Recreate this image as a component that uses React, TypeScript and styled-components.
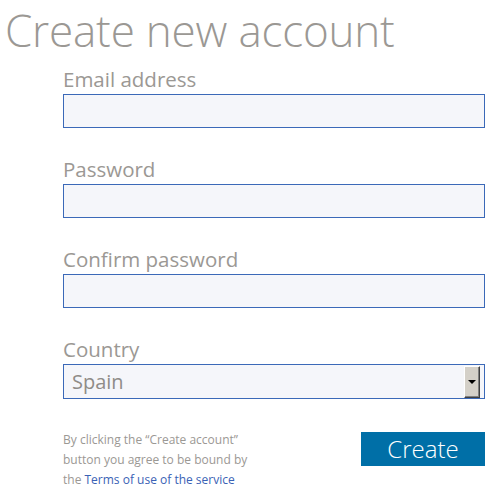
import React from "react";
import styled, { createGlobalStyle } from "styled-components";

const Global = createGlobalStyle`
  html, body { margin: 0; padding: 0; background: #ffffff; }
  body { font-family: "Open Sans", "Liberation Sans", sans-serif; }
  * { box-sizing: border-box; }
`;

const Page = styled.div`
  width: 490px;
  padding: 0 5px 0 0;
`;

const Title = styled.h1`
  margin: 0;
  padding: 0 0 0 5px;
  font-family: "Open Sans", sans-serif;
  font-weight: 300;
  font-size: 44px;
  line-height: 60px;
  color: #9b9894;
  letter-spacing: -0.2px;
`;

const Form = styled.form`
  margin: 8px 0 0 63px;
  display: flex;
  flex-direction: column;
  gap: 30px;
`;

const Field = styled.div`
  display: flex;
  flex-direction: column;
`;

const Label = styled.label`
  font-size: 20.5px;
  line-height: 22px;
  padding-bottom: 4px;
  color: #9b9894;
  font-weight: 400;
`;

const TextInput = styled.input`
  width: 100%;
  height: 34px;
  border: 1px solid #3b69b8;
  background: #f5f6fa;
  margin: 0;
  padding: 0 8px;
  font-family: inherit;
  font-size: 18px;
  outline: none;
`;

const SelectBox = styled.div`
  display: flex;
  align-items: center;
  height: 35px;
  border: 1px solid #3b69b8;
  background: #f5f6fa;
  padding: 1px 4px 1px 0;
`;

const NativeSelect = styled.select`
  flex: 1;
  height: 100%;
  appearance: none;
  -webkit-appearance: none;
  border: none;
  background: transparent;
  padding: 0 0 0 8px;
  font-family: inherit;
  font-size: 20px;
  color: #8f8c88;
  outline: none;
`;

const ArrowButton = styled.div`
  width: 16px;
  height: 32px;
  background: #d4d0c8;
  border-top: 1px solid #ffffff;
  border-left: 1px solid #ffffff;
  border-right: 1px solid #404040;
  border-bottom: 1px solid #404040;
  box-shadow: inset -1px -1px 0 #808080;
  display: flex;
  align-items: center;
  justify-content: center;
`;

const Triangle = styled.span`
  width: 0;
  height: 0;
  border-left: 4px solid transparent;
  border-right: 4px solid transparent;
  border-top: 4px solid #000000;
  margin-top: 1px;
`;

const Footer = styled.div`
  display: flex;
  justify-content: space-between;
  align-items: flex-start;
  margin-top: 1px;
`;

const Terms = styled.p`
  margin: 0;
  width: 200px;
  font-size: 12px;
  line-height: 20px;
  color: #9b9894;
`;

const TermsLink = styled.a`
  color: #3a62b5;
  text-decoration: none;
`;

const CreateButton = styled.button`
  width: 124px;
  height: 34px;
  margin-top: 2px;
  border: none;
  background: #006fa7;
  color: #ffffff;
  font-family: "Open Sans", sans-serif;
  font-weight: 300;
  font-size: 24px;
  line-height: 32px;
  padding: 0;
  cursor: pointer;
`;

export default function App() {
  return (
    <Page>
      <Global />
      <Title>Create new account</Title>
      <Form onSubmit={(e) => e.preventDefault()}>
        <Field>
          <Label>Email address</Label>
          <TextInput type="email" />
        </Field>
        <Field>
          <Label>Password</Label>
          <TextInput type="password" />
        </Field>
        <Field>
          <Label>Confirm password</Label>
          <TextInput type="password" />
        </Field>
        <Field>
          <Label>Country</Label>
          <SelectBox>
            <NativeSelect defaultValue="Spain">
              <option>Spain</option>
              <option>France</option>
              <option>Portugal</option>
            </NativeSelect>
            <ArrowButton>
              <Triangle />
            </ArrowButton>
          </SelectBox>
        </Field>
        <Footer>
          <Terms>
            By clicking the “Create account” button you agree to be bound by
            the <TermsLink href="#">Terms of use of the service</TermsLink>
          </Terms>
          <CreateButton type="submit">Create</CreateButton>
        </Footer>
      </Form>
    </Page>
  );
}
